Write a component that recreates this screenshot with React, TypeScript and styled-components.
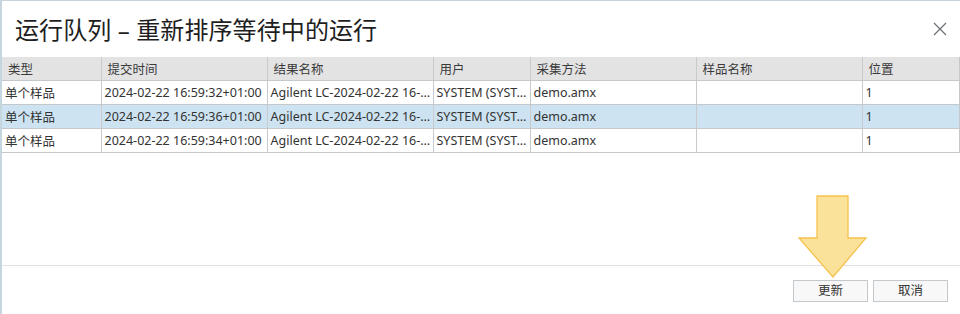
import styled, { createGlobalStyle } from "styled-components";

const GlobalStyle = createGlobalStyle`
  html, body {
    margin: 0;
    padding: 0;
    background: #ffffff;
  }
  body {
    font-family: "Noto Sans", "Noto Sans CJK SC", sans-serif;
  }
`;

const columns = [
  { key: "type", label: "类型", width: 99 },
  { key: "submitted", label: "提交时间", width: 166 },
  { key: "result", label: "结果名称", width: 166 },
  { key: "user", label: "用户", width: 97 },
  { key: "method", label: "采集方法", width: 166 },
  { key: "sample", label: "样品名称", width: 166 },
  { key: "position", label: "位置", width: 97 },
];

const rows = [
  {
    type: "单个样品",
    submitted: "2024-02-22 16:59:32+01:00",
    result: "Agilent LC-2024-02-22 16-…",
    user: "SYSTEM (SYST…",
    method: "demo.amx",
    sample: "",
    position: "1",
    selected: false,
  },
  {
    type: "单个样品",
    submitted: "2024-02-22 16:59:36+01:00",
    result: "Agilent LC-2024-02-22 16-…",
    user: "SYSTEM (SYST…",
    method: "demo.amx",
    sample: "",
    position: "1",
    selected: true,
  },
  {
    type: "单个样品",
    submitted: "2024-02-22 16:59:34+01:00",
    result: "Agilent LC-2024-02-22 16-…",
    user: "SYSTEM (SYST…",
    method: "demo.amx",
    sample: "",
    position: "1",
    selected: false,
  },
];

function App() {
  return (
    <>
      <GlobalStyle />
      <DialogWindow>
        <TitleBar>
          <Title>运行队列 – 重新排序等待中的运行</Title>
          <CloseButton aria-label="关闭">
            <svg width="14" height="14" viewBox="0 0 14 14">
              <path d="M1 1 L13 13 M13 1 L1 13" stroke="#6b6f74" strokeWidth="1.2" fill="none" />
            </svg>
          </CloseButton>
        </TitleBar>

        <QueueTable>
          <colgroup>
            {columns.map((c) => (
              <col key={c.key} style={{ width: c.width }} />
            ))}
          </colgroup>
          <thead>
            <tr>
              {columns.map((c) => (
                <HeadCell key={c.key}>{c.label}</HeadCell>
              ))}
            </tr>
          </thead>
          <tbody>
            {rows.map((r, i) => (
              <Row key={i} $selected={r.selected}>
                {columns.map((c) => (
                  <Cell key={c.key}>{(r as any)[c.key]}</Cell>
                ))}
              </Row>
            ))}
          </tbody>
        </QueueTable>

        <Filler />

        <Footer>
          <DialogButton>更新</DialogButton>
          <DialogButton>取消</DialogButton>
          <Arrow width="70" height="84" viewBox="0 0 70 84">
            <polygon
              points="19,1 50,1 50,43 68,43 35,82 1,43 19,43"
              fill="#fbe29b"
              stroke="#f6c14c"
              strokeWidth="1.3"
              strokeLinejoin="miter"
            />
          </Arrow>
        </Footer>
      </DialogWindow>
    </>
  );
}

export default App;

const DialogWindow = styled.div`
  position: relative;
  box-sizing: border-box;
  width: 960px;
  height: 314px;
  display: flex;
  flex-direction: column;
  background: #ffffff;
  border-top: 1px solid #c9d4da;
  border-left: 2px solid #c6d6df;
`;

const TitleBar = styled.div`
  height: 56px;
  display: flex;
  align-items: center;
  justify-content: space-between;
  padding: 0 13px 0 13px;
  box-sizing: border-box;
`;

const Title = styled.h1`
  margin: 0;
  margin-top: -1px;
  font-family: "Noto Sans", "Noto Sans CJK SC", sans-serif;
  font-weight: 400;
  font-size: 24px;
  color: #1e1e1e;
  letter-spacing: 0.1px;
`;

const CloseButton = styled.button`
  border: none;
  background: none;
  padding: 0;
  width: 14px;
  height: 14px;
  display: flex;
  margin-top: -1px;
`;

const QueueTable = styled.table`
  width: 957px;
  table-layout: fixed;
  border-collapse: collapse;
  font-family: "Noto Sans", "Noto Sans CJK SC", sans-serif;
  font-size: 12.5px;
  color: #333333;
  border-bottom: 1px solid #c4c8ca;
  border-right: 1px solid #c4c8ca;
`;

const HeadCell = styled.th`
  height: 23px;
  padding: 0 0 0 6px;
  text-align: left;
  font-weight: 400;
  background: #e3e3e4;
  color: #3a3a3a;
  border-left: 1px solid #c8cacc;
  border-bottom: 1px solid #c4c8ca;
  white-space: nowrap;
  overflow: hidden;
  &:first-child {
    border-left: none;
  }
`;

const Row = styled.tr<{ $selected: boolean }>`
  background: ${(p) => (p.$selected ? "#cde3f1" : "#ffffff")};
`;

const Cell = styled.td`
  height: 23px;
  padding: 0 0 0 3px;
  border-left: 1px solid #c8cacc;
  border-bottom: 1px solid #c4c8ca;
  white-space: nowrap;
  overflow: hidden;
  &:first-child {
    border-left: none;
  }
`;

const Filler = styled.div`
  flex: 1;
`;

const Footer = styled.div`
  position: relative;
  height: 49px;
  box-sizing: border-box;
  border-top: 1px solid #e2e2e2;
  display: flex;
  justify-content: flex-end;
  align-items: flex-start;
  gap: 5px;
  padding: 14px 12px 0 0;
`;

const DialogButton = styled.button`
  width: 75px;
  height: 22px;
  box-sizing: border-box;
  border: 1px solid #c3c9cc;
  background: #f8f8f8;
  font-family: "Noto Sans", "Noto Sans CJK SC", sans-serif;
  font-size: 12.5px;
  color: #333333;
  padding: 0;
  line-height: 20px;
`;

const Arrow = styled.svg`
  position: absolute;
  left: 796px;
  top: -71px;
`;
